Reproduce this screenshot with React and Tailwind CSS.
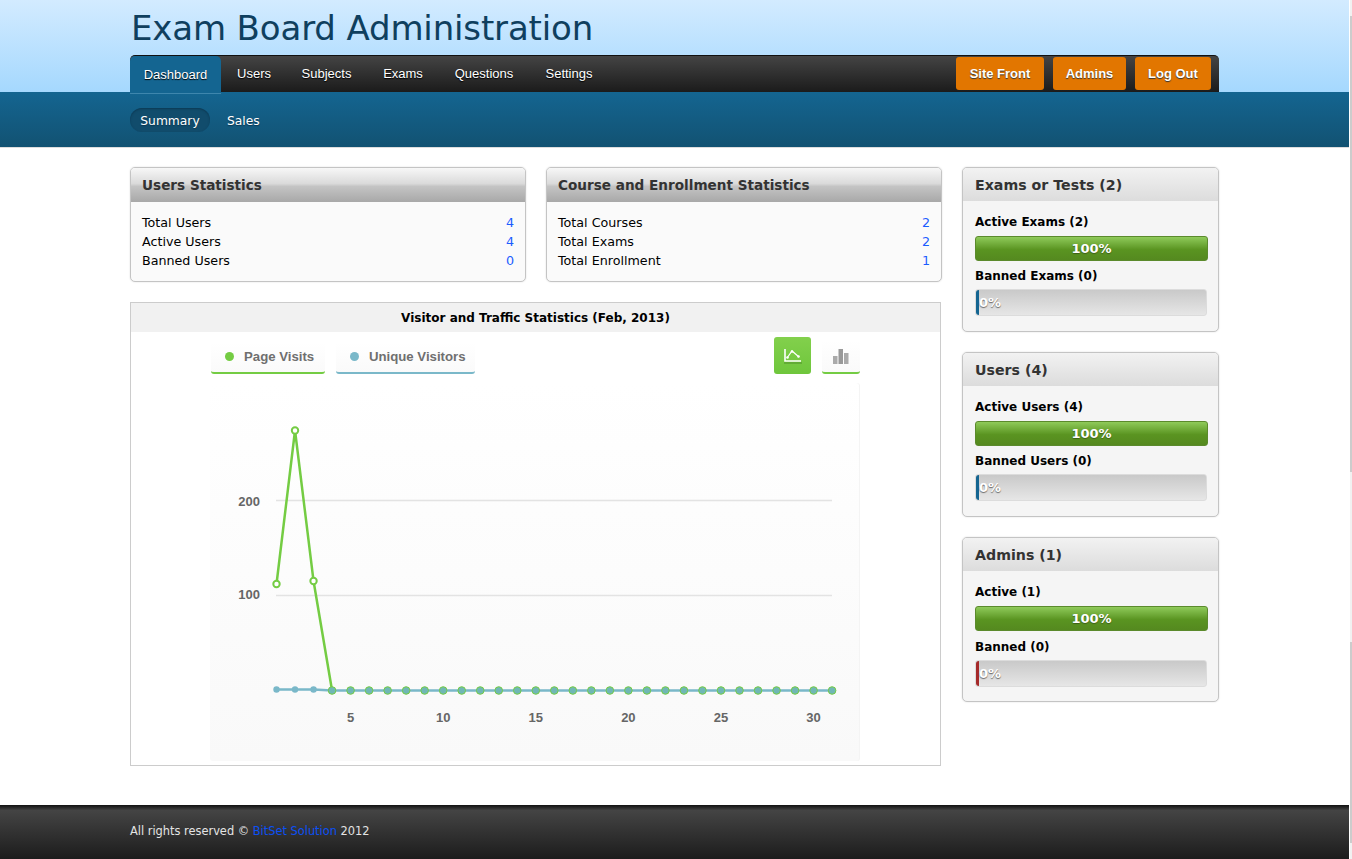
import React from 'react';

const sans = 'font-["DejaVu_Sans",sans-serif]';
const arial = 'font-["Liberation_Sans",Arial,sans-serif]';

const navItems = [
  { label: 'Users', width: 'w-[66px]' },
  { label: 'Subjects', width: 'w-[79px]' },
  { label: 'Exams', width: 'w-[74px]' },
  { label: 'Questions', width: 'w-[88px]' },
  { label: 'Settings', width: 'w-[82px]' },
];

const StatPanel = ({ title, rows }) => (
  <div className="w-[396px] shrink-0 rounded-[5px] border border-[#c4c4c4] bg-[#fafafa] shadow-[0_0_2px_#ddd]">
    <div className="flex h-[34px] items-center rounded-t-[4px] bg-[linear-gradient(#f7f7f7_0%,#dadada_46%,#c4c4c4_54%,#a8a8a8_100%)] px-[11px]">
      <h3 className="text-[13.6px] font-bold text-[#333]">{title}</h3>
    </div>
    <div className="flex h-[79px] flex-col px-[11px] pt-[11px] text-[12.7px] leading-[19px] text-black">
      {rows.map(([label, value]) => (
        <div key={label} className="flex justify-between">
          <span>{label}</span>
          <a className="text-[#1a5cff]">{value}</a>
        </div>
      ))}
    </div>
  </div>
);

const Progress = ({ tone }) => (
  <div className="relative h-[27px] w-[232px] rounded-[3px] border border-[#dcdcdc] bg-[linear-gradient(#c9c9c9,#e6e6e6)]">
    <span className={`absolute left-0 top-0 h-full w-[3px] rounded-l-[3px] ${tone}`}></span>
    <span className="absolute left-[3px] top-[3px] text-[13px] font-bold text-white [text-shadow:0_1px_1px_#666]">0%</span>
  </div>
);

const FullBar = () => (
  <div className="flex h-[25px] w-[233px] items-center justify-center rounded-[3px] border border-[#5b8a2c] bg-[linear-gradient(#8fca5a,#5a9421_55%,#55891f)] text-[13px] font-bold text-white [text-shadow:0_1px_1px_#3c5f18]">
    100%
  </div>
);

const SidePanel = ({ title, active, banned, tone, loose }) => (
  <div className="h-[165px] rounded-[5px] border border-[#c4c4c4] bg-[#f5f5f5] shadow-[0_0_2px_#ddd]">
    <div className="flex h-[33px] items-center rounded-t-[4px] bg-[linear-gradient(#f2f2f2,#dcdcdc)] px-[12px] pt-[2px]">
      <h3 className="text-[14.2px] font-bold text-[#333]">{title}</h3>
    </div>
    <div className="px-[12px] pt-[13px]">
      <div className="mb-[5px] text-[12px] font-bold leading-[17px] text-black">{active}</div>
      <FullBar />
      <div className={`mb-[4px] text-[12px] font-bold leading-[17px] text-black ${loose ? 'mt-[8px]' : 'mt-[7px]'}`}>{banned}</div>
      <Progress tone={tone} />
    </div>
  </div>
);

// plot area starts at x 210, y 383 of the page, the viewBox keeps those numbers
const TrafficChart = () => {
  const xAt = (day) => 276.5 + (day - 1) * 18.52;
  const days = Array.from({ length: 31 }, (_, i) => i + 1);
  const visits = [[1, 584], [2, 430.5], [3, 581], [4, 690.5]];
  const green = visits.map(([d, y]) => `${xAt(d)},${y}`).join(' ');
  return (
    <svg className={`absolute left-0 top-0 ${arial}`} width="650" height="378" viewBox="210 383 650 378">
      <line x1="276" x2="832" y1="500.5" y2="500.5" stroke="#e3e3e3" strokeWidth="1.5" />
      <line x1="276" x2="832" y1="595.5" y2="595.5" stroke="#e3e3e3" strokeWidth="1.5" />
      <text x="260" y="506" textAnchor="end" fontSize="13" fontWeight="700" fill="#666">200</text>
      <text x="260" y="599" textAnchor="end" fontSize="13" fontWeight="700" fill="#666">100</text>
      {[5, 10, 15, 20, 25, 30].map((n) => (
        <text key={n} x={xAt(n)} y="722" textAnchor="middle" fontSize="13" fontWeight="700" fill="#666">{n}</text>
      ))}
      <polyline points={green} fill="none" stroke="#74cc43" strokeWidth="2.5" />
      <polyline points={`${xAt(1)},689.5 ${xAt(3)},689.5 ${xAt(4)},690.5 ${xAt(31)},690.5`} fill="none" stroke="#7ab8c9" strokeWidth="2.5" />
      {visits.slice(0, 3).map(([d, y]) => (
        <circle key={d} cx={xAt(d)} cy={y} r="3.2" fill="#fff" stroke="#74cc43" strokeWidth="2" />
      ))}
      {days.slice(0, 3).map((d) => (
        <circle key={d} cx={xAt(d)} cy="689.5" r="3.2" fill="#7ab8c9" />
      ))}
      {days.slice(3).map((d) => (
        <circle key={d} cx={xAt(d)} cy="690.5" r="3.8" fill="#70b7b5" stroke="#74cc43" strokeWidth="1" />
      ))}
    </svg>
  );
};

const LineIcon = () => (
  <svg width="20" height="16" viewBox="0 0 20 16" fill="none">
    <path d="M2 1v12h16" stroke="#fff" strokeWidth="1.6" />
    <path d="M4 10l5-7 7 6" stroke="#fff" strokeWidth="1.2" />
    <circle cx="4.5" cy="9.5" r="1.3" fill="#fff" />
    <circle cx="9" cy="3.5" r="1.3" fill="#fff" />
    <circle cx="15.5" cy="8.5" r="1.3" fill="#fff" />
    <path d="M1 15h18" stroke="#4f8f2b" strokeWidth="1" />
  </svg>
);

const BarIcon = () => (
  <svg width="16" height="15" viewBox="0 0 16 15">
    <rect x="0" y="7" width="4.5" height="8" fill="#aaa" />
    <rect x="5.5" y="0" width="4.5" height="15" fill="#999" />
    <rect x="11" y="4" width="4.5" height="11" fill="#aaa" />
  </svg>
);

export default function App() {
  return (
    <div className="flex h-[859px] w-[1352px] overflow-hidden bg-white">
      <div className={`relative h-[859px] w-[1349px] shrink-0 ${sans}`}>
        {/* header */}
        <header className="h-[92px] bg-[linear-gradient(#d3ebff,#a5d8fe)]">
          <div className="mx-[130px] w-[1089px]">
            <h1 className="h-[55px] pl-[1px] pt-[8px] text-[34px] leading-[40px] tracking-[-0.15px] text-[#0f3f5e]">Exam Board Administration</h1>
            <nav className={`flex h-[37px] items-stretch justify-between rounded-t-[5px] border-t border-[#111] bg-[linear-gradient(#444,#1b1b1b)] ${arial}`}>
              <ul className="flex text-[13px] text-white [text-shadow:0_1px_1px_#000]">
                <li className="z-10 flex h-[38px] w-[91px] items-center justify-center rounded-t-[5px] border-b border-[#3e86ad] bg-[#146591]">Dashboard</li>
                {navItems.map((item) => (
                  <li key={item.label} className={`flex items-center justify-center pb-[1px] ${item.width}`}>{item.label}</li>
                ))}
              </ul>
              <div className="flex gap-[9px] pr-[8px] pt-[1px] text-[13px] font-bold text-white [text-shadow:0_1px_1px_#333]">
                <a className="flex h-[33px] w-[88px] items-center justify-center rounded-[3px] bg-[#e27600]">Site Front</a>
                <a className="flex h-[33px] w-[73px] items-center justify-center rounded-[3px] bg-[#e27600]">Admins</a>
                <a className="flex h-[33px] w-[76px] items-center justify-center rounded-[3px] bg-[#e27600]">Log Out</a>
              </div>
            </nav>
          </div>
        </header>

        {/* sub nav */}
        <div className="h-[56px] border-b border-[#ddd] bg-[linear-gradient(#146591,#125272)] [background-clip:padding-box]">
          <div className="mx-[130px] flex items-center gap-[17px] pt-[16px] text-[12.3px] text-white [text-shadow:0_1px_1px_#0a3550]">
            <span className="flex h-[24px] w-[80px] items-center justify-center rounded-full bg-[#114c6c] pt-[2px] shadow-[inset_0_1px_2px_#0c3a55]">Summary</span>
            <span className="pt-[2px]">Sales</span>
          </div>
        </div>

        {/* main */}
        <main className="mx-[130px] flex w-[1089px] justify-between pt-[19px]">
          <div className="w-[811px]">
            <div className="flex gap-[20px]">
              <StatPanel
                title="Users Statistics"
                rows={[['Total Users', 4], ['Active Users', 4], ['Banned Users', 0]]}
              />
              <StatPanel
                title="Course and Enrollment Statistics"
                rows={[['Total Courses', 2], ['Total Exams', 2], ['Total Enrollment', 1]]}
              />
            </div>

            <section className="mt-[20px] h-[464px] border border-[#ccc] bg-white">
              <div className="flex h-[29px] items-center justify-center bg-[#f1f1f1] text-[12px] font-bold text-black">
                Visitor and Traffic Statistics (Feb, 2013)
              </div>
              <div className={`ml-[79px] mr-[80px] ${arial}`}>
                <div className="flex h-[47px] items-start justify-between pt-[5px]">
                  <div className="ml-[1px] flex gap-[11px] pt-[6px] text-[13.2px] font-bold text-[#6f6f6f]">
                    <span className="flex h-[31px] w-[114px] items-center gap-[10px] rounded-b-[3px] border-b-2 border-[#74cc43] bg-[linear-gradient(#fff,#fafafa)] pb-[2px] pl-[14px]">
                      <i className="h-[9px] w-[9px] rounded-full bg-[#74cc43]"></i>Page Visits
                    </span>
                    <span className="flex h-[31px] w-[139px] items-center gap-[10px] rounded-b-[3px] border-b-2 border-[#7ab8c9] bg-[linear-gradient(#fff,#fafafa)] pb-[2px] pl-[14px]">
                      <i className="h-[9px] w-[9px] rounded-full bg-[#7ab8c9]"></i>Unique Visitors
                    </span>
                  </div>
                  <div className="flex gap-[11px]">
                    <span className="flex h-[37px] w-[37px] items-center justify-center rounded-[3px] bg-[linear-gradient(#82d04c,#6fc63c)]"><LineIcon /></span>
                    <span className="mt-[3px] flex h-[34px] w-[38px] items-center justify-center rounded-b-[3px] border-b-2 border-[#74cc43] bg-[linear-gradient(#fff,#fafafa)]"><BarIcon /></span>
                  </div>
                </div>
                <div className="relative mt-[4px] h-[378px] rounded-[3px] bg-[linear-gradient(#fff,#f9f9f9)] shadow-[inset_-1px_0_0_#f4f4f4]">
                  <TrafficChart />
                </div>
              </div>
            </section>
          </div>

          <aside className="flex w-[257px] flex-col gap-[20px]">
            <SidePanel title="Exams or Tests (2)" active="Active Exams (2)" banned="Banned Exams (0)" tone="bg-[#146591]" />
            <SidePanel title="Users (4)" active="Active Users (4)" banned="Banned Users (0)" tone="bg-[#146591]" />
            <SidePanel title="Admins (1)" active="Active (1)" banned="Banned (0)" tone="bg-[#a52a2a]" loose />
          </aside>
        </main>

        {/* footer */}
        <footer className="absolute bottom-0 left-0 h-[54px] w-full bg-[linear-gradient(#111_0,#444_10%,#1c1c1c_100%)] pl-[130px] pt-[18px] text-[11.4px] leading-[16px] text-[#e4e4e4]">
          All rights reserved © <a className="text-[#0b50f5]">BitSet Solution</a> 2012
        </footer>
      </div>

      {/* scrollbar strip */}
      <div className="ml-[1px] flex h-[859px] w-[2px] shrink-0 flex-col bg-[#f1f1f1]">
        <div className="mt-[16px] h-[456px] bg-[#ccc]"></div>
        <div className="mt-[170px] h-[201px] bg-[#ccc]"></div>
      </div>
    </div>
  );
}
